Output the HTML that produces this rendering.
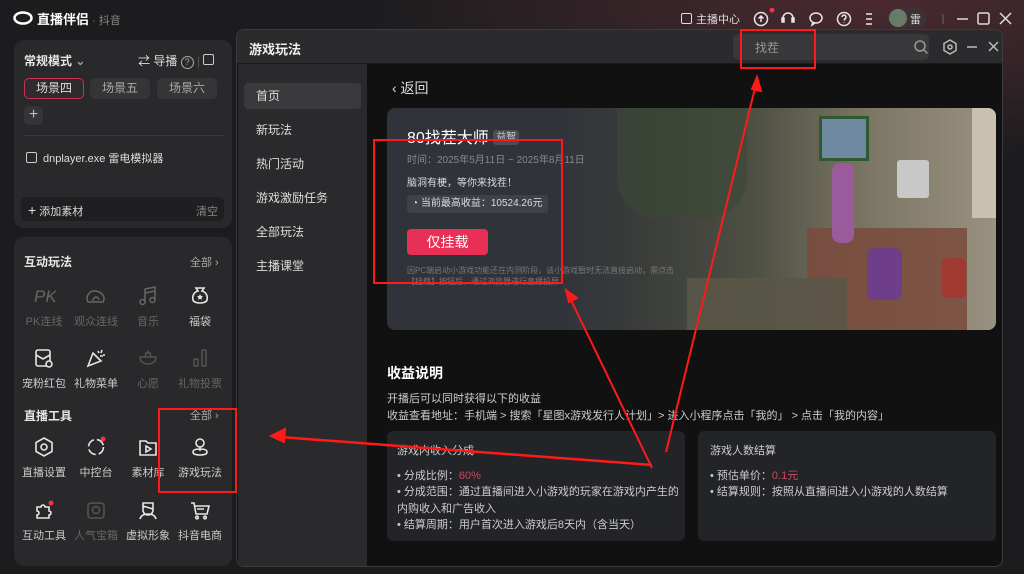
<!DOCTYPE html>
<html><head><meta charset="utf-8">
<style>
*{margin:0;padding:0;box-sizing:border-box}
body{width:1024px;height:574px;overflow:hidden;background:#1c1c1e;font-family:"Liberation Sans","Noto Sans CJK SC",sans-serif;color:#e6e6e6;position:relative}
.bgtint{position:absolute;left:0;top:0;width:1024px;height:574px;background:radial-gradient(ellipse 520px 160px at 880px 0px,#4a2a30 0%,rgba(40,30,32,0) 100%)}
.abs{position:absolute}
.panel{position:absolute;background:#29292b;border-radius:10px}
.t12{font-size:12px}
.t11{font-size:11px}
.chip{position:absolute;height:21px;border-radius:5px;background:#353537;font-size:12px;color:#aaa;text-align:center;line-height:21px}
.ic{position:absolute;width:54px;text-align:center;font-size:11px}
.ic svg{display:block;margin:0 auto 6px}
.dim{color:#666}
.menu div{height:26px;line-height:26px;padding-left:12px;font-size:12px;color:#ddd;margin-bottom:8px;border-radius:4px}
</style></head><body>
<div class="bgtint"></div>
<svg class="abs" style="left:13px;top:11px" width="20" height="14"><ellipse cx="10" cy="7" rx="8.5" ry="5.5" fill="none" stroke="#fff" stroke-width="2.5"/></svg>
<div class="abs" style="left:37px;top:9px;font-size:13px;font-weight:bold;color:#fff">直播伴侣</div>
<div class="abs t11" style="left:92px;top:12px;color:#888">· 抖音</div>
<div class="abs" style="left:681px;top:11px;font-size:11px;color:#ddd"><span style="display:inline-block;width:11px;height:11px;border:1.5px solid #ddd;border-radius:2px;vertical-align:-1px;margin-right:4px"></span>主播中心</div>
<svg class="abs" style="left:752px;top:8px" width="120" height="20" fill="none" stroke="#e6e6e6" stroke-width="1.5">
<circle cx="9" cy="11" r="6.5"/><path d="M9 14V8M6.5 10.5L9 8l2.5 2.5"/>
<circle cx="20" cy="2" r="2.5" fill="#f2304f" stroke="none"/>
<path d="M31 13v-3a5 5 0 0 1 10 0v3M30 10h2v4h-2zM40 10h2v4h-2z"/>
<ellipse cx="64" cy="10" rx="6" ry="5"/><path d="M61 14l-1 3 3-2"/>
<circle cx="92" cy="11" r="6.5"/><path d="M90 9a2 2 0 1 1 2.5 2v1.5M92 14.5v.5"/>
<path d="M114 6h10M114 11h10M114 16h10"/>
</svg>
<div class="abs" style="left:888px;top:8px;width:38px;height:20px;border-radius:10px;background:#3a3234"></div>
<div class="abs" style="left:889px;top:9px;width:18px;height:18px;border-radius:9px;background:#6a7a68"></div>
<div class="abs t11" style="left:910px;top:11px;color:#ddd">雷</div>
<svg class="abs" style="left:940px;top:8px" width="80" height="20" fill="none" stroke="#ddd" stroke-width="1.5"><path d="M3 6v10" stroke="#555"/><path d="M17 11h11"/><rect x="38" y="5" width="11" height="11" rx="1.5"/><path d="M60 5l11 11M71 5L60 16"/></svg>

<div class="panel" style="left:14px;top:40px;width:218px;height:188px"></div>
<div class="abs t12" style="left:24px;top:52px;font-weight:bold">常规模式 <span style="color:#999">⌄</span></div>
<div class="abs t12" style="left:138px;top:52px;color:#ddd">⇄ 导播 <span style="display:inline-block;width:13px;height:13px;border:1.2px solid #aaa;border-radius:7px;font-size:9px;text-align:center;line-height:11px;color:#aaa">?</span> <span style="color:#555">|</span> <span style="display:inline-block;width:11px;height:11px;border:1.3px solid #ccc;border-radius:2px"></span></div>
<div class="chip" style="left:24px;top:78px;width:60px;border:1.5px solid #c8324a;background:#2f2a2c;color:#ddd;line-height:18px">场景四</div>
<div class="chip" style="left:90px;top:78px;width:60px">场景五</div>
<div class="chip" style="left:157px;top:78px;width:60px">场景六</div>
<div class="chip" style="left:24px;top:106px;width:19px;height:19px;line-height:18px;font-size:16px;color:#bbb">+</div>
<div class="abs" style="left:24px;top:135px;width:200px;height:1px;background:#3a3a3c"></div>
<div class="abs t11" style="left:26px;top:150px;color:#ddd"><span style="display:inline-block;width:11px;height:11px;border:1.3px solid #ccc;border-radius:2px;vertical-align:-1px;margin-right:6px"></span>dnplayer.exe 雷电模拟器</div>
<div class="abs" style="left:21px;top:197px;width:203px;height:24px;border-radius:5px;background:#1f1f21"></div>
<div class="abs t11" style="left:28px;top:202px;color:#ddd"><span style="font-size:14px">+</span> 添加素材</div>
<div class="abs t11" style="left:196px;top:203px;color:#888">清空</div>

<div class="panel" style="left:14px;top:237px;width:218px;height:329px"></div>
<div class="abs t12" style="left:24px;top:253px;font-weight:bold">互动玩法</div>
<div class="abs t11" style="left:190px;top:254px;color:#aaa">全部 ›</div>
<div class="abs t12" style="left:24px;top:407px;font-weight:bold">直播工具</div>
<div class="abs t11" style="left:190px;top:407px;color:#aaa">全部 ›</div>

<div class="ic dim" style="left:17px;top:285px"><svg width="24" height="22"><text x="2" y="17" font-size="17" font-style="italic" fill="#666" font-family="Liberation Sans">PK</text></svg>PK连线</div>
<div class="ic dim" style="left:69px;top:285px"><svg width="24" height="22" fill="none" stroke="#666" stroke-width="1.5"><path d="M4 17c-3-6 2-12 8-11 6 1 10 6 7 11zM9 16c0-4 5-6 6-1"/></svg>观众连线</div>
<div class="ic dim" style="left:121px;top:285px"><svg width="24" height="22" fill="none" stroke="#666" stroke-width="1.5"><path d="M9 17V4l10-2v13"/><circle cx="6.5" cy="17" r="2.5"/><circle cx="16.5" cy="15" r="2.5"/><path d="M9 8l10-2"/></svg>音乐</div>
<div class="ic" style="left:173px;top:285px;color:#ccc"><svg width="24" height="22" fill="none" stroke="#e6e6e6" stroke-width="1.6"><path d="M8 3h8l-2 3c4 1 6 5 5 9-1 4-13 4-14 0-1-4 1-8 5-9z"/><path d="M12 9l1 2 2 .3-1.5 1.4.4 2-1.9-1-1.9 1 .4-2L9 11.3l2-.3z" fill="#e6e6e6" stroke="none"/></svg>福袋</div>

<div class="ic" style="left:17px;top:347px;color:#ccc"><svg width="24" height="22" fill="none" stroke="#e6e6e6" stroke-width="1.6"><rect x="4" y="3" width="14" height="16" rx="2"/><path d="M4 8l7 4 7-4"/><circle cx="17" cy="17" r="3" fill="#29292b"/></svg>宠粉红包</div>
<div class="ic" style="left:69px;top:347px;color:#ccc"><svg width="24" height="22" fill="none" stroke="#e6e6e6" stroke-width="1.6"><path d="M4 19l5-13 8 8z"/><path d="M14 4l1 2M18 3l-1 3M19 8h2M16 9l3 0"/></svg>礼物菜单</div>
<div class="ic dim" style="left:121px;top:347px"><svg width="24" height="22" fill="none" stroke="#555" stroke-width="1.5"><path d="M4 10h16c0 4-3 7-8 7s-8-3-8-7zM9 10l1-4h4l1 4M12 3v3"/></svg>心愿</div>
<div class="ic dim" style="left:173px;top:347px"><svg width="24" height="22" fill="none" stroke="#555" stroke-width="1.5"><rect x="6" y="12" width="4" height="7" rx="1"/><rect x="14" y="3" width="4" height="16" rx="1"/></svg>礼物投票</div>

<div class="ic" style="left:17px;top:436px;color:#ccc"><svg width="24" height="22" fill="none" stroke="#e6e6e6" stroke-width="1.6"><path d="M12 2l8 4.5v9L12 20l-8-4.5v-9z"/><circle cx="12" cy="11" r="3"/></svg>直播设置</div>
<div class="ic" style="left:69px;top:436px;color:#ccc"><svg width="24" height="22" fill="none" stroke="#e6e6e6" stroke-width="1.6"><circle cx="12" cy="11" r="7.5" stroke-dasharray="9 3"/><circle cx="19" cy="3" r="2.5" fill="#f2304f" stroke="none"/></svg>中控台</div>
<div class="ic" style="left:121px;top:436px;color:#ccc"><svg width="24" height="22" fill="none" stroke="#e6e6e6" stroke-width="1.6"><path d="M4 5h6l2 2h8v12H4z"/><path d="M10 10v6l5-3z"/></svg>素材库</div>
<div class="ic" style="left:173px;top:436px;color:#ccc"><svg width="24" height="22" fill="none" stroke="#e6e6e6" stroke-width="1.6"><circle cx="12" cy="7" r="4"/><path d="M12 11v4M5 16c0-2 3-3 7-3s7 1 7 3-3 3-7 3-7-1-7-3z"/></svg>游戏玩法</div>

<div class="ic" style="left:17px;top:499px;color:#ccc"><svg width="24" height="22" fill="none" stroke="#e6e6e6" stroke-width="1.6"><path d="M5 8h4a2 2 0 1 1 4 0h4v4a2 2 0 1 1 0 4v3H5v-3a2 2 0 1 0 0-4z"/><circle cx="19" cy="4" r="2.5" fill="#f2304f" stroke="none"/></svg>互动工具</div>
<div class="ic dim" style="left:69px;top:499px"><svg width="24" height="22" fill="none" stroke="#555" stroke-width="1.5"><rect x="4" y="4" width="16" height="15" rx="3"/><circle cx="12" cy="11" r="3.5"/></svg>人气宝箱</div>
<div class="ic" style="left:121px;top:499px;color:#ccc"><svg width="24" height="22" fill="none" stroke="#e6e6e6" stroke-width="1.6"><path d="M7 4h10v7a5 5 0 0 1-10 0zM4 20c1-4 4-5 8-5s7 1 8 5M7 7l10 3"/></svg>虚拟形象</div>
<div class="ic" style="left:173px;top:499px;color:#ccc"><svg width="24" height="22" fill="none" stroke="#e6e6e6" stroke-width="1.6"><path d="M3 4h3l2 11h11l2-8H7M9 10h7"/><circle cx="9" cy="18.5" r="1.3"/><circle cx="17" cy="18.5" r="1.3"/></svg>抖音电商</div>

<div class="abs" style="left:236px;top:29px;width:767px;height:538px;border:1px solid #3c3c3e;border-radius:8px;background:#111;overflow:hidden">
 <div class="abs" style="left:0;top:0;width:767px;height:34px;background:#2b2b2d;border-bottom:1px solid #1a1a1a"></div>
 <div class="abs" style="left:12px;top:9px;font-size:13px;font-weight:bold;color:#eee">游戏玩法</div>
 <div class="abs" style="left:496px;top:4px;width:196px;height:26px;border-radius:5px;background:#38383a"></div>
 <div class="abs t12" style="left:518px;top:9px;color:#999">找茬</div>
 <svg class="abs" style="left:676px;top:9px" width="16" height="16" fill="none" stroke="#999" stroke-width="1.5"><circle cx="7" cy="7" r="5"/><path d="M11 11l3.5 3.5"/></svg>
 <svg class="abs" style="left:704px;top:8px" width="60" height="18" fill="none" stroke="#bbb" stroke-width="1.5"><path d="M9 2l6 3.5v7L9 16l-6-3.5v-7z"/><circle cx="9" cy="9" r="2"/><path d="M26 9h10M48 4l9 9M57 4l-9 9"/></svg>
 <div class="abs menu" style="left:1px;top:34px;width:129px;height:504px;background:#2a2a2c;padding:19px 6px 0 6px">
  <div style="background:#3a3a3c">首页</div><div>新玩法</div><div>热门活动</div><div>游戏激励任务</div><div>全部玩法</div><div>主播课堂</div>
 </div>
 <div class="abs" style="left:155px;top:48px;font-size:14px;color:#ddd">‹ 返回</div>
 <div class="abs" style="left:150px;top:78px;width:609px;height:222px;border-radius:8px;background:#30333a;overflow:hidden">
  <div class="abs" style="left:170px;top:0;width:439px;height:222px;background:linear-gradient(90deg,#30333a 0%,#3a3d3a 20%,#4e5044 45%,#7a7462 70%,#9a9280 100%)"></div>
  <div class="abs" style="left:230px;top:0;width:130px;height:110px;background:#3a4a36;opacity:.6;border-radius:0 0 40px 40px"></div>
  <div class="abs" style="left:432px;top:8px;width:50px;height:45px;background:#6f8aa0;border:3px solid #2f5a30"></div>
  <div class="abs" style="left:420px;top:120px;width:160px;height:102px;background:#7a4a3c;opacity:.85"></div>
  <div class="abs" style="left:300px;top:170px;width:160px;height:52px;background:#5a5648;opacity:.9"></div>
  <div class="abs" style="left:510px;top:52px;width:32px;height:38px;background:#c8c8c8;border-radius:3px"></div>
  <div class="abs" style="left:445px;top:55px;width:22px;height:80px;background:#9a5a9c;border-radius:8px"></div>
  <div class="abs" style="left:480px;top:140px;width:35px;height:52px;background:#6e3e8a;border-radius:8px"></div>
  <div class="abs" style="left:555px;top:150px;width:24px;height:40px;background:#a03a30;border-radius:6px"></div>
  <div class="abs" style="left:585px;top:0;width:24px;height:110px;background:#c8c0b0"></div>
 </div>
 <div class="abs" style="left:170px;top:94px;font-size:16px;color:#fff">80找茬大师 <span style="font-size:10px;background:#4a4d54;color:#ccc;padding:2px 3px;border-radius:3px;vertical-align:3px">益智</span></div>
 <div class="abs" style="left:170px;top:121px;font-size:10px;color:#888">时间：2025年5月11日 ~ 2025年8月11日</div>
 <div class="abs" style="left:170px;top:144px;font-size:10px;color:#ddd">脑洞有梗，等你来找茬！</div>
 <div class="abs" style="left:170px;top:165px;height:18px;padding:0 5px;border-radius:3px;background:#3e4148;font-size:10px;color:#ddd;line-height:18px">◔ 当前最高收益：10524.26元</div>
 <div class="abs" style="left:170px;top:199px;width:81px;height:26px;border-radius:4px;background:#e82f55;color:#fff;font-size:14px;text-align:center;line-height:26px">仅挂载</div>
 <div class="abs" style="left:170px;top:235px;width:270px;font-size:8px;color:#777;line-height:11px">因PC端启动小游戏功能还在内测阶段，该小游戏暂时无法直接启动，需点击【挂载】按钮后，通过浏览器进行直播投屏</div>
 <div class="abs" style="left:150px;top:333px;font-size:14px;font-weight:bold;color:#fff">收益说明</div>
 <div class="abs t11" style="left:150px;top:360px;color:#ccc">开播后可以同时获得以下的收益</div>
 <div class="abs t11" style="left:150px;top:377px;color:#ccc">收益查看地址：手机端 &gt; 搜索「星图x游戏发行人计划」&gt; 进入小程序点击「我的」 &gt; 点击「我的内容」</div>
 <div class="abs" style="left:150px;top:401px;width:298px;height:110px;border-radius:6px;background:#232427"></div>
 <div class="abs" style="left:461px;top:401px;width:298px;height:110px;border-radius:6px;background:#232427"></div>
 <div class="abs t11" style="left:160px;top:413px;color:#ccc;line-height:16.5px">游戏内收入分成<div style="height:8px"></div>• 分成比例：<span style="color:#d0475e">60%</span><br>• 分成范围：通过直播间进入小游戏的玩家在游戏内产生的<br>内购收入和广告收入<br>• 结算周期：用户首次进入游戏后8天内（含当天）</div>
 <div class="abs t11" style="left:473px;top:413px;color:#ccc;line-height:16.5px">游戏人数结算<div style="height:8px"></div>• 预估单价：<span style="color:#d0475e">0.1元</span><br>• 结算规则：按照从直播间进入小游戏的人数结算</div>
</div>

<svg class="abs" style="left:0;top:0" width="1024" height="574" fill="none" stroke="#ff1a1a" stroke-width="2">
<rect x="374" y="140" width="188" height="143"/>
<rect x="741" y="30" width="74" height="38"/>
<rect x="159" y="409" width="77" height="83"/>
<path d="M652 465L280 437" stroke-width="2.5"/><path d="M271 436l14-7-1 13z" fill="#ff1a1a"/>
<path d="M652 468L570 298" stroke-width="2"/><path d="M566 290l11 8-8 4z" fill="#ff1a1a"/>
<path d="M666 452L755 88" stroke-width="2"/><path d="M757 77l4 14-9-2z" fill="#ff1a1a"/>
</svg>
</body></html>
